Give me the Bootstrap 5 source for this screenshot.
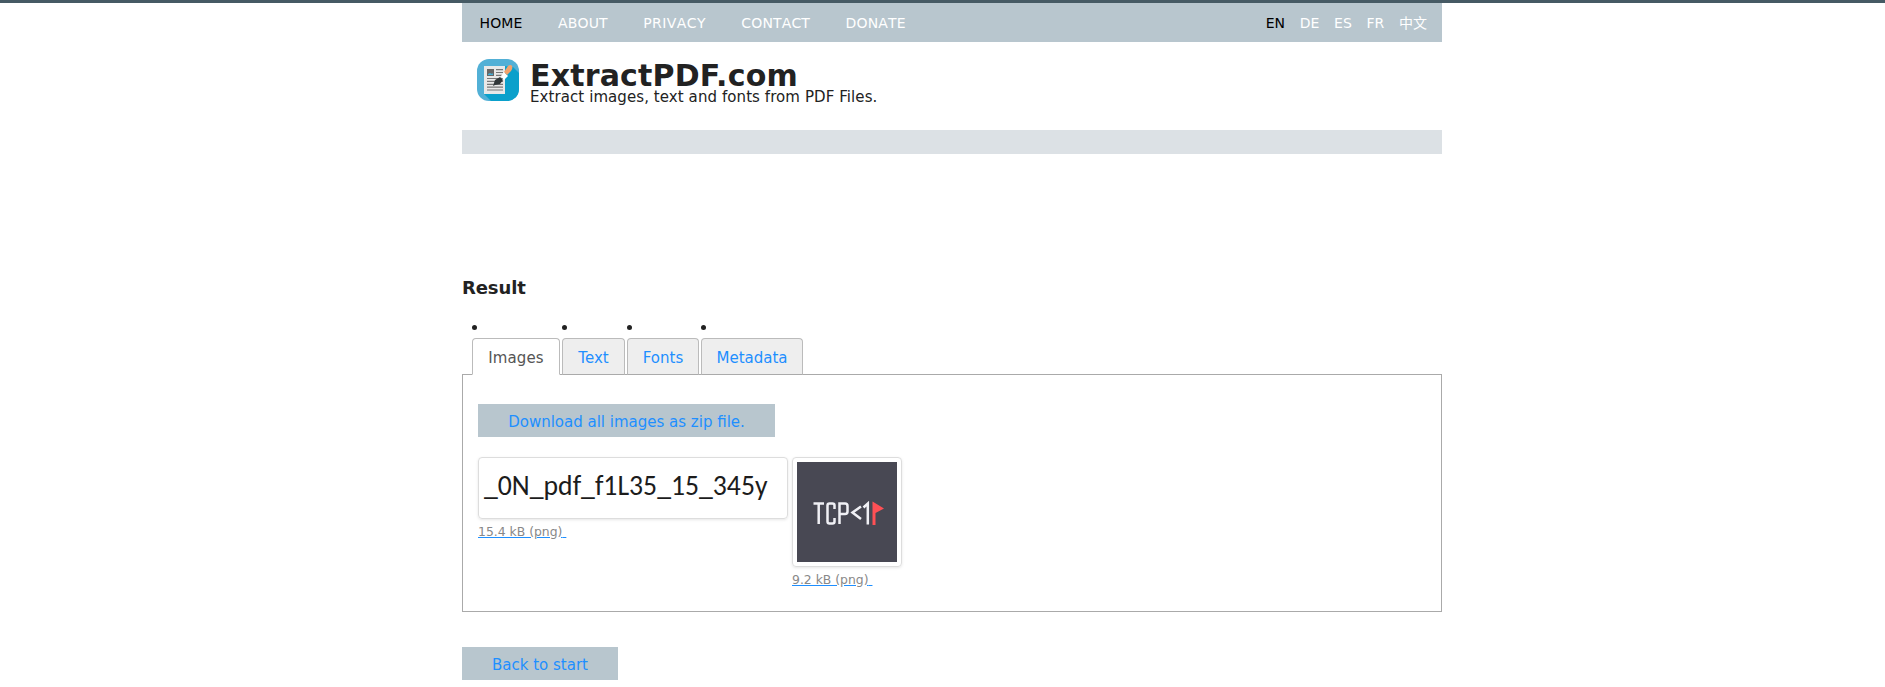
<!DOCTYPE html>
<html lang="en">
<head>
<meta charset="utf-8">
<title>ExtractPDF.com</title>
<link href="https://cdn.jsdelivr.net/npm/bootstrap@5.3.0/dist/css/bootstrap.min.css" rel="stylesheet">
<style>
body{font-family:Verdana,"DejaVu Sans","Noto Sans CJK SC",sans-serif;font-size:15px;line-height:20px;color:#222;background:#fff;border-top:3px solid #465a64;padding-left:19px;overflow:hidden}
.page{width:980px}
.topbar{height:39px;background:#b8c6ce;font-size:14px;padding:0 15px 0 17.5px;font-kerning:none}
.topbar a{color:#fff;text-decoration:none;margin-right:35.5px;letter-spacing:.14px}
.topbar a.wide{letter-spacing:.4px}
.topbar .langs a{margin:0 0 0 14.7px;letter-spacing:0}
.topbar a.active{color:#000}
.brand{height:88px;padding:17px 0 0 15px}
.brand svg{margin-right:11px}
.brand h1{font-size:30px;line-height:30px;font-weight:700;margin:2px 0 0;letter-spacing:.18px}
.brand p{line-height:20px;margin:-4px 0 0;letter-spacing:.08px}
.strip{height:24px;background:#dce1e5}
h2.result{font-size:18px;line-height:24px;font-weight:700;margin:122px 0 0;letter-spacing:-.1px}
.tabs{margin:25px 0 0 10px;padding:0;gap:2px;list-style:none}
.tabs li::before{content:"";display:block;width:5px;height:5px;border-radius:50%;background:#222;margin-bottom:8px}
.tabs a{display:block;height:37px;line-height:38px;text-align:center;border:1px solid #bbb;border-bottom-color:#aaa;border-radius:4px 4px 0 0;background:#eee;color:#1e8fff;text-decoration:none;margin-bottom:-1px;position:relative}
.tabs a.active{background:#fff;color:#555;border-bottom-color:#fff;letter-spacing:.15px}
.t1{width:88px}.t2{width:63px}.t3{width:72px}.t4{width:102px}
.panel{height:238px;border:1px solid #aaa;padding:29px 15px}
.flatbtn{display:inline-block;height:33px;line-height:36px;text-align:center;background:#b8c6ce;color:#1e8fff;text-decoration:none;white-space:nowrap}
.b1{width:297px}.b2{width:156px;margin-top:35px}
.thumbs{margin-top:20px;gap:4px}
.thumbs a{display:block;font-size:12.4px;line-height:18px;color:#1e8fff;text-decoration:underline;white-space:pre}
.thumbs a span{color:#888}
.pic{display:block;padding:4px;border:1px solid #ddd;border-radius:4px;box-shadow:0 1px 3px rgba(0,0,0,.1);margin-bottom:4px}
</style>
</head>
<body>
<main class="page mx-auto">
  <nav class="topbar d-flex align-items-center justify-content-between text-nowrap">
    <div class="d-flex"><a class="active" href="#">HOME</a><a href="#">ABOUT</a><a class="wide" href="#">PRIVACY</a><a href="#">CONTACT</a><a href="#">DONATE</a></div>
    <div class="langs d-flex"><a class="active" href="#">EN</a><a href="#">DE</a><a href="#">ES</a><a href="#">FR</a><a href="#">中文</a></div>
  </nav>
  <header class="brand d-flex align-items-start">
    <svg width="42" height="42" viewBox="0 0 42 42">
      <defs><clipPath id="r"><rect width="42" height="42" rx="12"/></clipPath></defs>
      <g clip-path="url(#r)"><rect width="42" height="42" fill="#52b0d6"/><path d="M7 35 28 7 36 8 42 14V42H14Z" fill="#0ba0cb"/></g>
      <path d="M7 7H28V35H7Z" fill="#e8e8e8"/>
      <path d="M10 10h7v7h-7Z" fill="#666"/><path d="M11 16v-1l2-1 2 1 1-1v2Z" fill="#45add5"/>
      <path d="M19 10.7h7M19 13.5h7M19 16.4h7M10 19.5h16M10 22.3h16M10 25.3h16M10 28.2h16M10 31h16" stroke="#777" stroke-width="1.2"/>
      <path d="M24 17 27 13 31 17 27 21Z" fill="#fff"/>
      <path d="M27 13 31 7Q34 5 35 7 36 9 34 12L30 16Z" fill="#f3a36d"/>
      <path d="M16 27 18 21 23 18 26 21 23 25 18 26Z" fill="#303638"/>
    </svg>
    <div><h1>ExtractPDF.com</h1><p>Extract images, text and fonts from PDF Files.</p></div>
  </header>
  <div class="strip"></div>
  <h2 class="result">Result</h2>
  <ul class="tabs d-flex">
    <li class="t1"><a class="active" href="#">Images</a></li>
    <li class="t2"><a href="#">Text</a></li>
    <li class="t3"><a href="#">Fonts</a></li>
    <li class="t4"><a href="#">Metadata</a></li>
  </ul>
  <section class="panel">
    <a class="flatbtn b1" href="#">Download all images as zip file.</a>
    <div class="thumbs d-flex align-items-start">
      <a href="#"><svg class="pic" width="310" height="62" viewBox="0 0 300 52"><text transform="translate(1 32.500) scale(.9 1)" font-family="Carlito,'Open Sans',sans-serif" font-size="28" textLength="315" lengthAdjust="spacingAndGlyphs" fill="#1c1c1c">_0N_pdf_f1L35_15_345y</text></svg><span>15.4 kB (png)</span> </a>
      <a href="#"><svg class="pic" width="110" height="110" viewBox="0 0 100 100"><rect width="100" height="100" fill="#484853"/>
        <g fill="none" stroke="#f0f0f5" stroke-width="2.5"><path d="M16.500 41.500h10.500M21.700 41.500V62M37.500 47v-3.500q0-2-2-2h-3q-2 0-2 2v16q0 2 2 2h3q2 0 2-2V56M42.500 62V41.500h5.500q2.500 0 2.500 2.500v5.500q0 2.500-2.500 2.500h-5.500M64 44.500 55.500 50.500 64 57M66.500 45.500 70.800 41.500V62.500"/></g>
        <path d="M75.500 39.500 87 46.500 78.500 51V63h-3Z" fill="#ff5055"/></svg><span>9.2 kB (png)</span> </a>
    </div>
  </section>
  <a class="flatbtn b2" href="#">Back to start</a>
</main>
<script src="https://cdn.jsdelivr.net/npm/bootstrap@5.3.0/dist/js/bootstrap.bundle.min.js"></script>
</body>
</html>
